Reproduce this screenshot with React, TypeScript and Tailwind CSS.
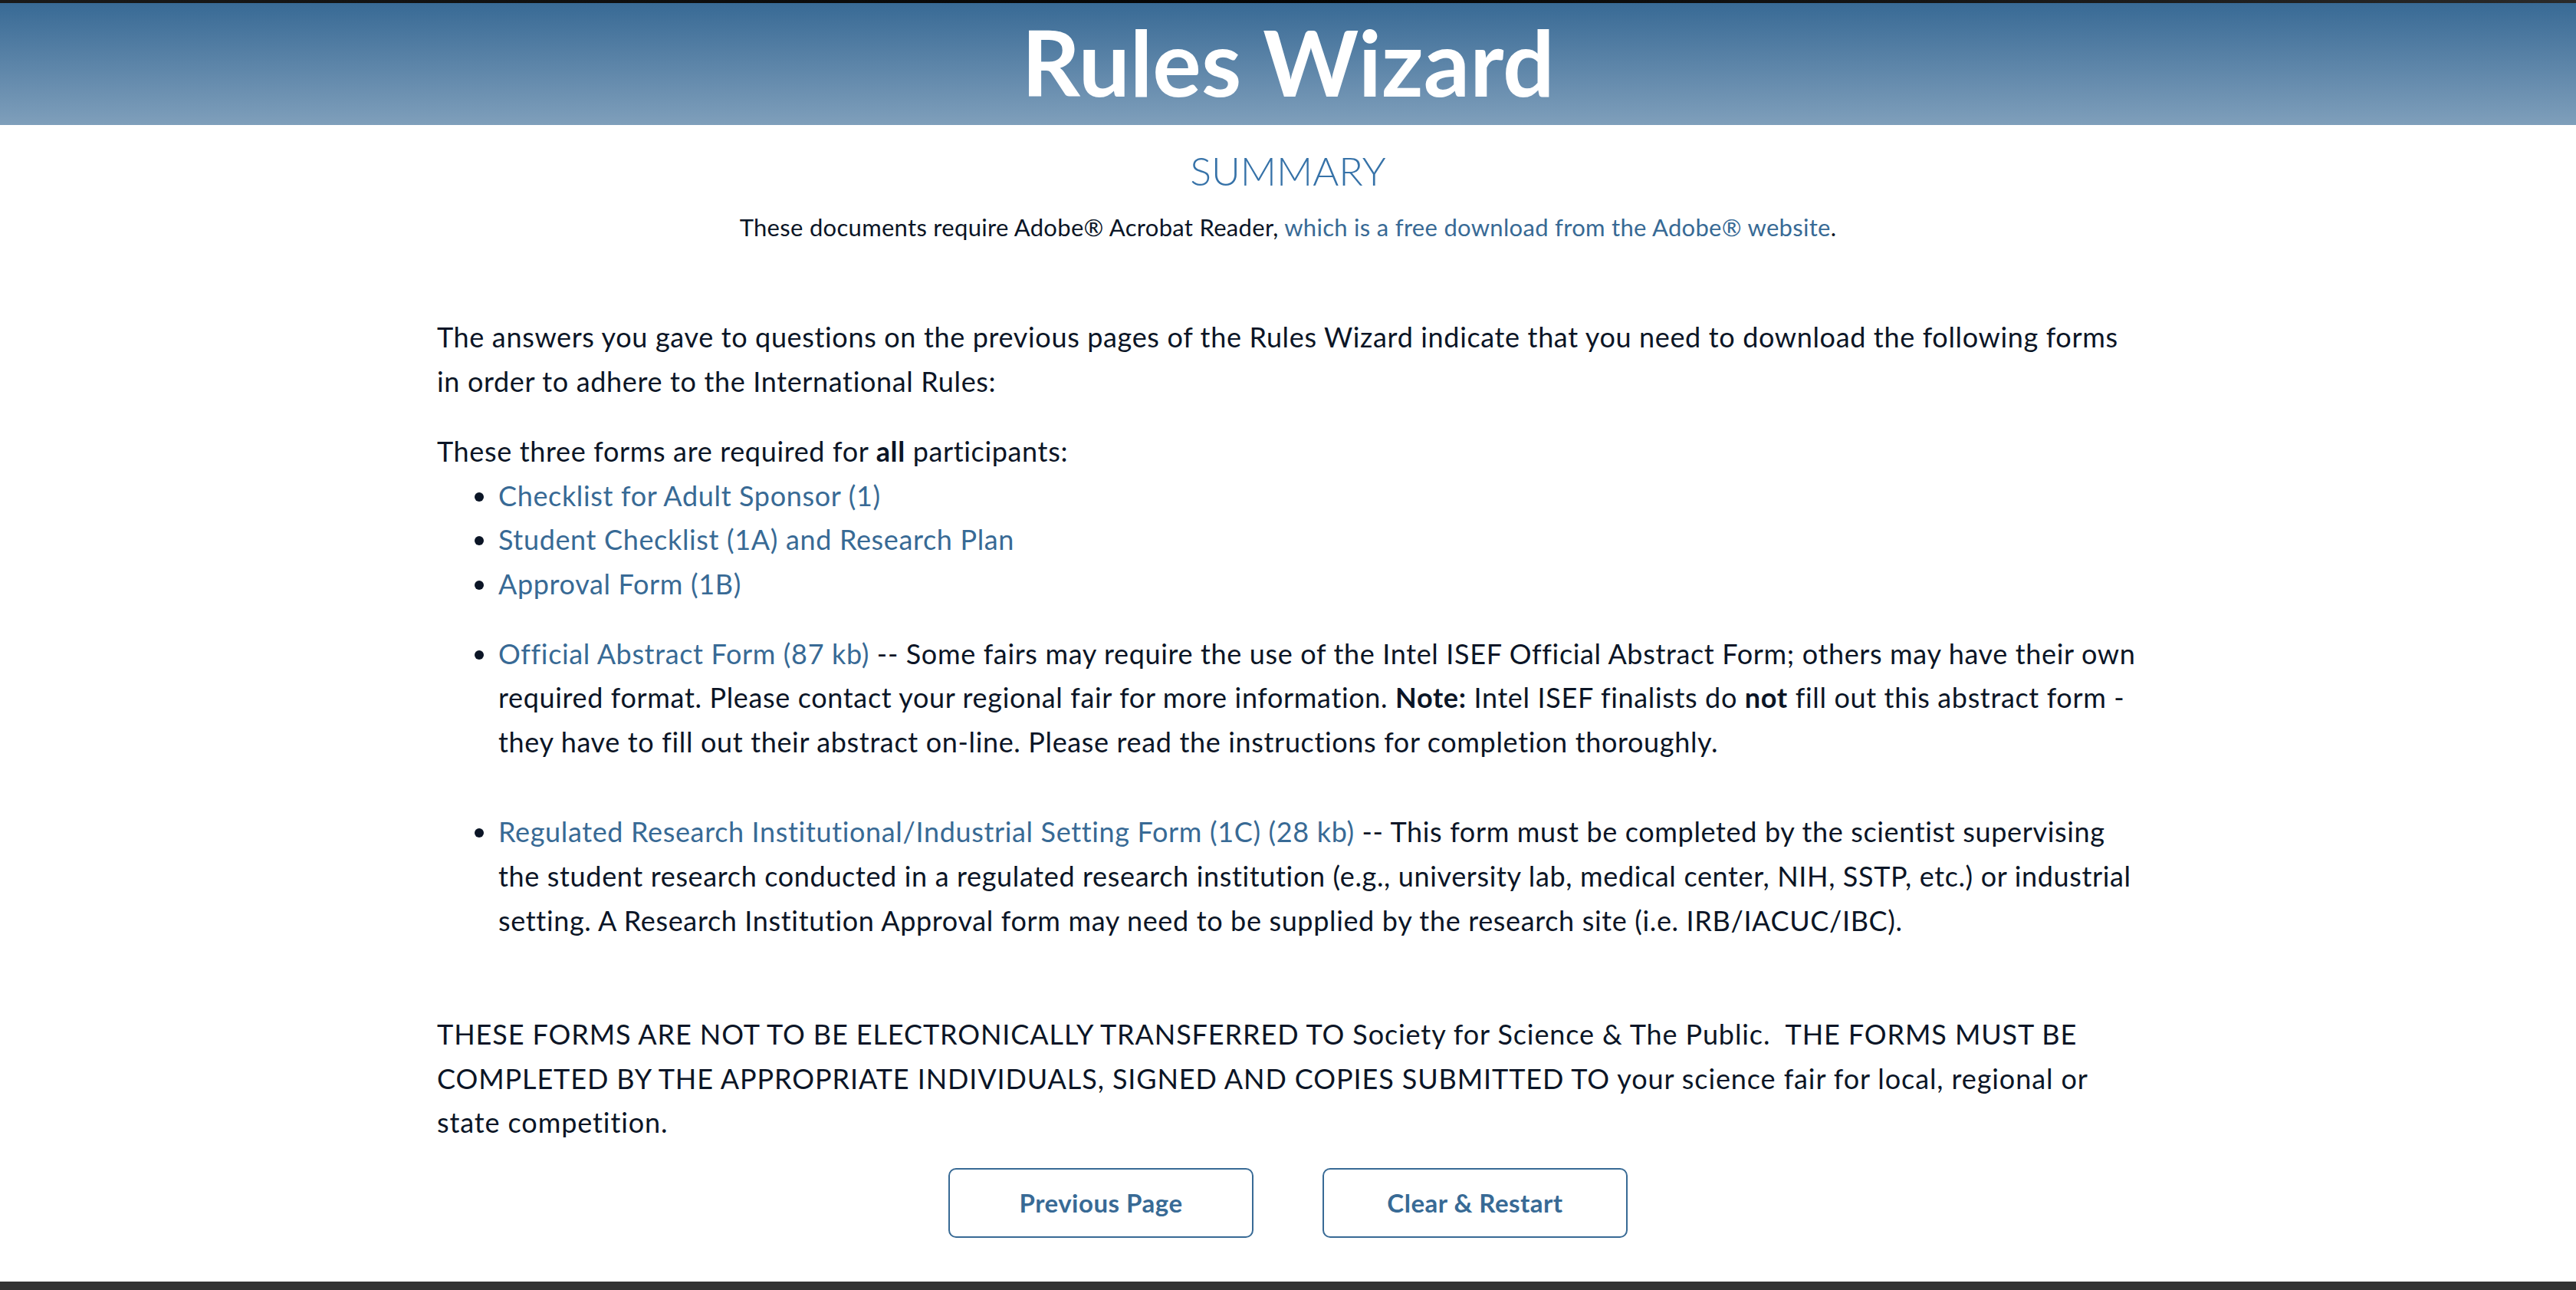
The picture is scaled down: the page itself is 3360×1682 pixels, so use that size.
import React from 'react';

const linkCls = 'text-[#386a95] hover:underline';
const btnCls =
  'h-[91px] w-[398px] rounded-[10px] border-2 border-[#386a95] bg-white text-[33px] font-bold tracking-[0.5px] text-[#386a95]';

export default function App() {
  return (
    <div className="min-h-screen bg-white text-[#0b1526]" style={{ fontFamily: 'Lato, "Open Sans", sans-serif' }}>
      <div className="h-[4px] bg-gradient-to-r from-[#1a1a1a] via-[#050505] to-[#2a2a2a]" />
      <header className="flex h-[159px] items-center justify-center bg-gradient-to-b from-[#386a95] to-[#7f9fbb] pb-[6px]">
        <h1 className="text-[119px] font-bold leading-none text-white">Rules Wizard</h1>
      </header>

      <main className="mx-auto w-[2220px]">
        <h2 className="mt-[28px] text-center text-[52px] font-light leading-[62px] text-[#3672a8]">SUMMARY</h2>
        <p className="mt-[19px] text-center text-[31px] leading-[48px] tracking-[0.3px]">
          These documents require Adobe® Acrobat Reader,{' '}
          <a href="#" className={linkCls}>which is a free download from the Adobe® website</a>.
        </p>

        <div className="mt-[91px] text-[36px] leading-[57.6px] tracking-[0.65px]">
          <p>
            The answers you gave to questions on the previous pages of the Rules Wizard indicate that you need to
            download the following forms in order to adhere to the International Rules:
          </p>

          <p className="mt-[34px]">
            These three forms are required for <b>all</b> participants:
          </p>
          <ul className="list-disc pl-[80px]">
            <li><a href="#" className={linkCls}>Checklist for Adult Sponsor (1)</a></li>
            <li><a href="#" className={linkCls}>Student Checklist (1A) and Research Plan</a></li>
            <li><a href="#" className={linkCls}>Approval Form (1B)</a></li>
          </ul>

          <ul className="mt-[33px] list-disc pl-[80px]">
            <li>
              <a href="#" className={linkCls}>Official Abstract Form (87 kb)</a> -- Some fairs may require the use of
              the Intel ISEF Official Abstract Form; others may have their own required format. Please contact your
              regional fair for more information. <b>Note:</b> Intel ISEF finalists do <b>not</b> fill out this
              abstract form - they have to fill out their abstract on-line. Please read the instructions for
              completion thoroughly.
            </li>
            <li className="mt-[60px]">
              <a href="#" className={linkCls}>Regulated Research Institutional/Industrial Setting Form (1C) (28 kb)</a>{' '}
              -- This form must be completed by the scientist supervising the student research conducted in a
              regulated research institution (e.g., university lab, medical center, NIH, SSTP, etc.) or industrial
              setting. A Research Institution Approval form may need to be supplied by the research site (i.e.
              IRB/IACUC/IBC).
            </li>
          </ul>

          <p className="mt-[91px] tracking-[0.9px]">
            THESE FORMS ARE NOT TO BE ELECTRONICALLY TRANSFERRED TO Society for Science &amp; The Public.&nbsp; THE
            FORMS MUST BE COMPLETED BY THE APPROPRIATE INDIVIDUALS, SIGNED AND COPIES SUBMITTED TO your science fair
            for local, regional or state competition.
          </p>
        </div>

        <div className="mt-[30px] flex justify-center gap-[90px]">
          <button className={btnCls}>Previous Page</button>
          <button className={btnCls}>Clear &amp; Restart</button>
        </div>
      </main>

      <footer className="mt-[57px] h-[40px] bg-[#333333]" />
    </div>
  );
}
